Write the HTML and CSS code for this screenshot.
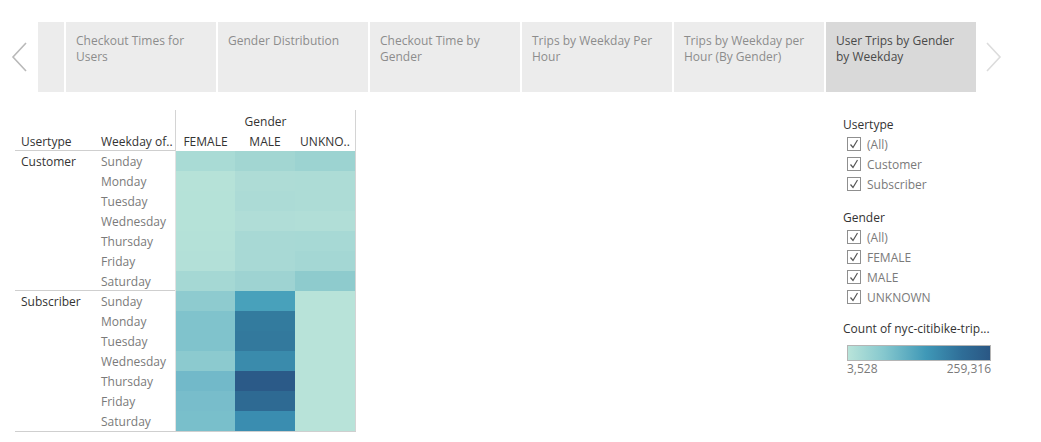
FILE: index.html
```html
<!DOCTYPE html>
<html lang="en">
<head>
<meta charset="utf-8">
<title>User Trips by Gender by Weekday</title>
<link rel="stylesheet" href="styles.css">
</head>
<body>
<nav class="tabbar">
  <button class="nav prev" aria-label="Previous">
    <svg width="18" height="30" viewBox="0 0 18 30"><polyline points="15,1 2,15 15,29" fill="none" stroke="#b9b9b9" stroke-width="1.6"/></svg>
  </button>
  <div class="tab stub"></div>
  <div class="tab">Checkout Times for Users</div>
  <div class="tab">Gender Distribution</div>
  <div class="tab">Checkout Time by Gender</div>
  <div class="tab">Trips by Weekday Per Hour</div>
  <div class="tab">Trips by Weekday per Hour (By Gender)</div>
  <div class="tab active">User Trips by Gender by Weekday</div>
  <button class="nav next" aria-label="Next">
    <svg width="18" height="30" viewBox="0 0 18 30"><polyline points="3,1 16,15 3,29" fill="none" stroke="#dcdcdc" stroke-width="1.6"/></svg>
  </button>
</nav>

<main class="content">
  <div class="heat">
    <div class="hcorner"></div>
    <div class="hgender">Gender</div>

    <div class="hlabel">Usertype</div>
    <div class="hlabel">Weekday of..</div>
    <div class="hcol first">FEMALE</div>
    <div class="hcol">MALE</div>
    <div class="hcol last">UNKNO..</div>

    <div class="utype cust">Customer</div>
    <div class="wday">Sunday</div><div class="cell first" style="background:#a9dbd5"></div><div class="cell" style="background:#a2d6d2"></div><div class="cell last" style="background:#9cd3d1"></div>
    <div class="wday">Monday</div><div class="cell first" style="background:#b6e2d8"></div><div class="cell" style="background:#aedcd6"></div><div class="cell last" style="background:#addcd6"></div>
    <div class="wday">Tuesday</div><div class="cell first" style="background:#b5e2d8"></div><div class="cell" style="background:#acdbd6"></div><div class="cell last" style="background:#addcd6"></div>
    <div class="wday">Wednesday</div><div class="cell first" style="background:#b5e2d8"></div><div class="cell" style="background:#b0ddd7"></div><div class="cell last" style="background:#b1ded7"></div>
    <div class="wday">Thursday</div><div class="cell first" style="background:#b4e1d8"></div><div class="cell" style="background:#a8d9d5"></div><div class="cell last" style="background:#a7d9d5"></div>
    <div class="wday">Friday</div><div class="cell first" style="background:#b3e0d8"></div><div class="cell" style="background:#a8d9d5"></div><div class="cell last" style="background:#a4d7d4"></div>
    <div class="wday sep">Saturday</div><div class="cell first" style="background:#a5d8d4"></div><div class="cell" style="background:#9ed3d2"></div><div class="cell last" style="background:#8ecbcd"></div>

    <div class="utype sub">Subscriber</div>
    <div class="wday">Sunday</div><div class="cell first" style="background:#8ecbcf"></div><div class="cell" style="background:#48a1bb"></div><div class="cell last" style="background:#b8e3d9"></div>
    <div class="wday">Monday</div><div class="cell first" style="background:#80c3cc"></div><div class="cell" style="background:#337b9e"></div><div class="cell last" style="background:#b8e3d9"></div>
    <div class="wday">Tuesday</div><div class="cell first" style="background:#80c3cc"></div><div class="cell" style="background:#33799d"></div><div class="cell last" style="background:#b8e3d9"></div>
    <div class="wday">Wednesday</div><div class="cell first" style="background:#8ccacf"></div><div class="cell" style="background:#3a8bac"></div><div class="cell last" style="background:#b8e3d9"></div>
    <div class="wday">Thursday</div><div class="cell first" style="background:#72b9c9"></div><div class="cell" style="background:#2b5a88"></div><div class="cell last" style="background:#b8e3d9"></div>
    <div class="wday">Friday</div><div class="cell first" style="background:#78bdcb"></div><div class="cell" style="background:#2e6a93"></div><div class="cell last" style="background:#b8e3d9"></div>
    <div class="wday">Saturday</div><div class="cell first" style="background:#79bfcb"></div><div class="cell" style="background:#3a8db0"></div><div class="cell last" style="background:#b8e3d9"></div>
  </div>

  <aside class="filters">
    <section class="filter usertype">
      <h3 class="ftitle">Usertype</h3>
      <label class="fitem"><span class="box"><svg width="12" height="12" viewBox="0 0 12 12"><polyline points="2.5,6.5 5,9.5 9.5,2" fill="none" stroke="#555" stroke-width="1.2"/></svg></span>(All)</label>
      <label class="fitem"><span class="box"><svg width="12" height="12" viewBox="0 0 12 12"><polyline points="2.5,6.5 5,9.5 9.5,2" fill="none" stroke="#555" stroke-width="1.2"/></svg></span>Customer</label>
      <label class="fitem"><span class="box"><svg width="12" height="12" viewBox="0 0 12 12"><polyline points="2.5,6.5 5,9.5 9.5,2" fill="none" stroke="#555" stroke-width="1.2"/></svg></span>Subscriber</label>
    </section>
    <section class="filter gender">
      <h3 class="ftitle">Gender</h3>
      <label class="fitem"><span class="box"><svg width="12" height="12" viewBox="0 0 12 12"><polyline points="2.5,6.5 5,9.5 9.5,2" fill="none" stroke="#555" stroke-width="1.2"/></svg></span>(All)</label>
      <label class="fitem"><span class="box"><svg width="12" height="12" viewBox="0 0 12 12"><polyline points="2.5,6.5 5,9.5 9.5,2" fill="none" stroke="#555" stroke-width="1.2"/></svg></span>FEMALE</label>
      <label class="fitem"><span class="box"><svg width="12" height="12" viewBox="0 0 12 12"><polyline points="2.5,6.5 5,9.5 9.5,2" fill="none" stroke="#555" stroke-width="1.2"/></svg></span>MALE</label>
      <label class="fitem"><span class="box"><svg width="12" height="12" viewBox="0 0 12 12"><polyline points="2.5,6.5 5,9.5 9.5,2" fill="none" stroke="#555" stroke-width="1.2"/></svg></span>UNKNOWN</label>
    </section>
    <section class="legend">
      <h3 class="ftitle">Count of nyc-citibike-trip...</h3>
      <div class="ramp"></div>
      <div class="rampLabels"><span>3,528</span><span>259,316</span></div>
    </section>
  </aside>
</main>
</body>
</html>
```

FILE: styles.css
```css
* { box-sizing: border-box; }
html, body { margin: 0; padding: 0; background: #fff; }
body {
  font-family: "Open Sans", "Noto Sans", sans-serif;
  font-size: 12px;
  color: #333;
  width: 1041px;
  height: 442px;
  overflow: hidden;
}

/* ---------- tab bar ---------- */
.tabbar {
  display: flex;
  height: 70px;
  margin-top: 22px;
}
.nav {
  border: 0;
  background: transparent;
  padding: 0;
  display: flex;
  align-items: center;
  justify-content: center;
}
.nav.prev { width: 38px; justify-content: flex-start; padding-left: 11px; }
.nav.next { width: 40px; justify-content: flex-start; padding-left: 8px; }
.tab {
  width: 150px;
  margin-right: 2px;
  background: #ececec;
  color: #8c8c8c;
  padding: 11px 10px 0 10px;
  line-height: 16px;
  font-size: 12px;
}
.tab.stub { width: 26px; padding: 0; }
.tab.active { background: #d9d9d9; color: #4a4a4a; margin-right: 0; }

/* ---------- content ---------- */
.content {
  display: flex;
  justify-content: space-between;
  margin-top: 18px;
  padding-left: 15px;
  padding-right: 40px;
}

/* ---------- heatmap ---------- */
.heat {
  display: grid;
  grid-template-columns: 80px 80px 60px 60px 61px;
  grid-template-rows: 21px 20px repeat(14, 20px);
  border-bottom: 1px solid #cfcfcf;
  height: 322px;
  align-self: flex-start;
}
.hcorner { grid-column: 1 / 3; }
.hgender {
  grid-column: 3 / 6;
  text-align: center;
  padding-top: 2px;
  line-height: 20px;
  border-left: 1px solid #d4d4d4;
  border-right: 1px solid #d4d4d4;
  color: #333;
}
.hlabel {
  padding: 1px 0 0 6px;
  line-height: 19px;
  border-bottom: 1px solid #cfcfcf;
  color: #333;
  white-space: nowrap;
}
.hcol {
  text-align: center;
  padding-top: 1px;
  line-height: 19px;
  color: #333;
}
.hcol.first { border-left: 1px solid #d4d4d4; }
.hcol.last { border-right: 1px solid #d4d4d4; }
.utype {
  grid-column: 1;
  grid-row: span 7;
  padding: 1px 0 0 6px;
  line-height: 20px;
  color: #333;
}
.utype.cust { border-bottom: 1px solid #cfcfcf; }
.wday {
  grid-column: 2;
  padding: 1px 0 0 6px;
  line-height: 20px;
  color: #7a7a7a;
}
.wday.sep { border-bottom: 1px solid #cfcfcf; }
.cell.first { border-left: 1px solid #e2e2e2; }
.cell.last { border-right: 1px solid #d4d4d4; }

/* ---------- filters ---------- */
.filters {
  width: 158px;
  padding-top: 6px;
}
.ftitle {
  margin: 0;
  font-size: 12px;
  font-weight: normal;
  color: #333;
  line-height: 18px;
}
.filter.usertype { margin-bottom: 15px; }
.filter.gender { margin-bottom: 13px; }
.fitem {
  display: flex;
  align-items: center;
  height: 20px;
  padding-left: 4px;
  color: #7a7a7a;
}
.box {
  width: 14px;
  height: 14px;
  border: 1px solid #8f8f8f;
  margin-right: 6px;
  display: flex;
  align-items: center;
  justify-content: center;
  background: #fff;
}
.legend .ftitle { white-space: nowrap; }
.ramp {
  margin: 7px 0 0 4px;
  width: 144px;
  height: 16px;
  border: 1px solid #b5b5b5;
  background: linear-gradient(to right, #b9e4da 0%, #86c8ce 25%, #3f98b7 55%, #2f6e98 80%, #2a5784 100%);
}
.rampLabels {
  margin-left: 4px;
  width: 144px;
  display: flex;
  justify-content: space-between;
  color: #7a7a7a;
  line-height: 16px;
}
```
